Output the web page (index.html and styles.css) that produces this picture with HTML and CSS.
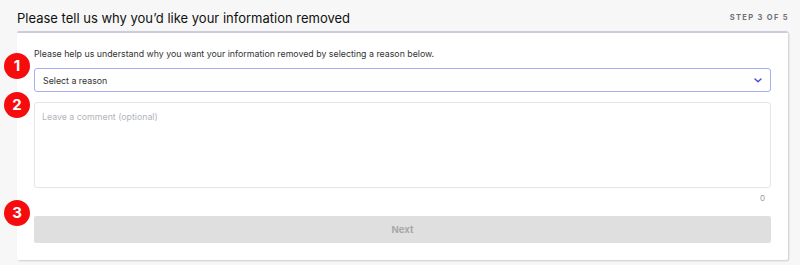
FILE: index.html
```html
<!DOCTYPE html>
<html>
<head>
    <title>Remove my information | Step 3</title>
    <link rel="stylesheet" href="styles.css">
</head>
<body>
    <div class="page">
        <div class="step-header">
            <h1 class="step-title">Please tell us why you’d like your information removed</h1>
            <span class="step-count">STEP 3 OF 5</span>
        </div>

        <div class="step-card">
            <p class="step-intro">Please help us understand why you want your information removed by selecting a reason below.</p>

            <div class="field">
                <span class="marker marker-select">1</span>
                <div class="select-box">
                    <span>Select a reason</span>
                    <svg class="chevron" width="8" height="5" viewBox="0 0 8 5">
                        <path d="M1 1 L4 3.8 L7 1" fill="none" stroke="#3b4cd8" stroke-width="1.4" stroke-linecap="round" stroke-linejoin="round"/>
                    </svg>
                </div>
            </div>

            <div class="field">
                <span class="marker marker-comment">2</span>
                <textarea class="comment-box" placeholder="Leave a comment (optional)"></textarea>
            </div>
            <div class="char-count">0</div>

            <div class="field">
                <span class="marker marker-next">3</span>
                <button class="next-button" disabled>Next</button>
            </div>
        </div>
    </div>
</body>
</html>
```

FILE: styles.css
```css
body {
    font-family: Inter, "Liberation Sans", Arial, sans-serif;
    margin: 0;
    padding: 0;
    background-color: #f7f7f7;
}
.page {
    padding: 0 12px 5px 17px;
}
.step-header {
    display: flex;
    align-items: center;
    justify-content: space-between;
    height: 31px;
    padding-top: 4px;
    box-sizing: border-box;
}
.step-title {
    margin: 0;
    font-size: 13px;
    font-weight: 400;
    color: #111;
}
.step-count {
    font-size: 7.5px;
    font-weight: 700;
    letter-spacing: 1.35px;
    color: #6f7178;
    margin-right: -1px;
}
.step-card {
    position: relative;
    background-color: #fff;
    border-top: 2px solid #cdccda;
    border-radius: 2px;
    box-shadow: 1px 1px 2px rgba(0, 0, 0, 0.18);
    padding: 15px 17px 17px 17px;
}
.step-intro {
    margin: 0 0 8px 0;
    font-size: 8.8px;
    line-height: 12px;
    color: #333;
}
.field {
    position: relative;
}
.marker {
    position: absolute;
    left: -30px;
    width: 26px;
    height: 26px;
    border-radius: 50%;
    background-color: #f60c0c;
    color: #fff;
    font-size: 15px;
    font-weight: 700;
    line-height: 26px;
    text-align: center;
}
.marker-select {
    top: -15px;
}
.marker-comment {
    top: -10px;
}
.marker-next {
    top: -16px;
}
.select-box {
    display: flex;
    align-items: center;
    justify-content: space-between;
    height: 24px;
    box-sizing: border-box;
    border: 1px solid #a7acf4;
    border-radius: 3px;
    padding: 0 8px 0 8px;
    font-size: 8.8px;
    color: #333;
    margin-bottom: 10px;
}
.chevron {
    display: block;
}
.comment-box {
    display: block;
    width: 100%;
    height: 86px;
    box-sizing: border-box;
    border: 1px solid #e6e6e9;
    border-radius: 3px;
    padding: 8px 7px;
    font-family: Inter, "Liberation Sans", Arial, sans-serif;
    font-size: 8.8px;
    resize: none;
    outline: none;
}
.comment-box::placeholder {
    color: #b2b4bc;
}
.char-count {
    text-align: right;
    font-size: 8px;
    color: #9a9a9a;
    padding: 5px 6px 0 0;
    height: 28px;
    box-sizing: border-box;
}
.next-button {
    display: block;
    width: 100%;
    height: 27px;
    border: none;
    border-radius: 2px;
    background-color: #dfdfdf;
    color: #a8a8a8;
    font-family: Inter, "Liberation Sans", Arial, sans-serif;
    font-size: 9.5px;
    font-weight: 700;
}
```
